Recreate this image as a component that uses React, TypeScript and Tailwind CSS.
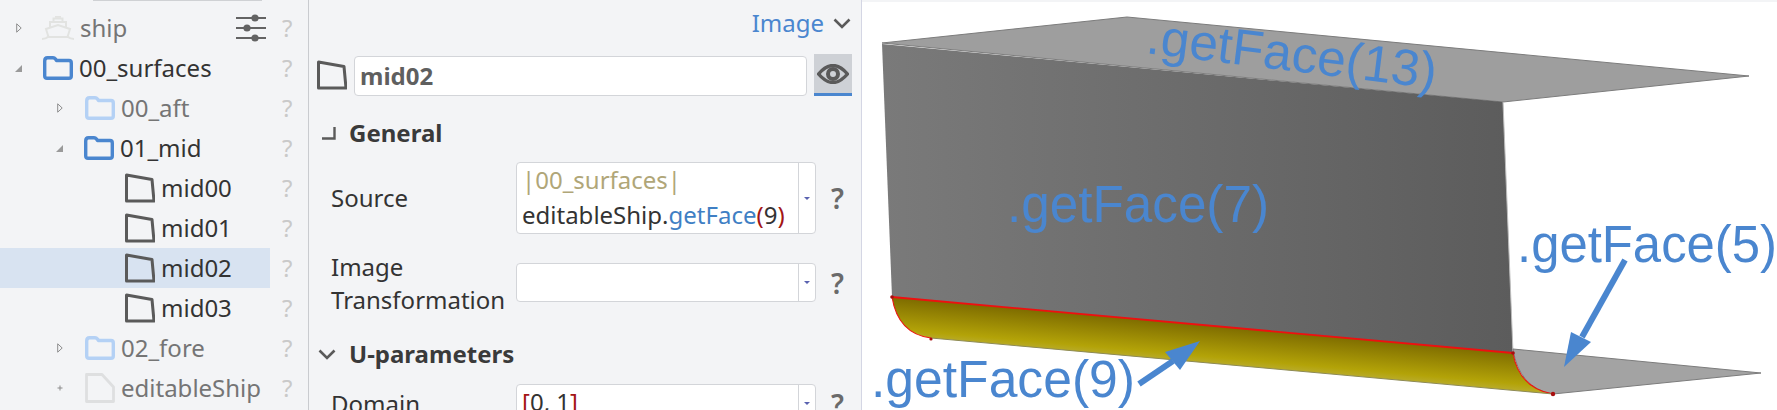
import React from "react";

const BLUE = "#4a86cf";

function Quad({ className = "" }: { className?: string }) {
  return (
    <svg width="30" height="30" viewBox="0 0 30 30" className={className} fill="none">
      <path d="M1.5 2 L27 6.5 L29 28 L1.5 28 Z" stroke="#5a5a5a" strokeWidth="3" strokeLinejoin="round" />
    </svg>
  );
}

function Folder({ light }: { light?: boolean }) {
  return (
    <svg width="30" height="24" viewBox="0 0 30 24" fill="none" className="shrink-0">
      <path
        d="M1.7 5 Q1.7 1.7 4.5 1.7 H10 Q11.5 1.7 12.5 3 L13.5 4.5 H26 Q28.3 4.5 28.3 7 V20 Q28.3 22.3 26 22.3 H4 Q1.7 22.3 1.7 20 Z"
        stroke={light ? "#b4d1f5" : BLUE}
        strokeWidth="3.4"
        strokeLinejoin="round"
      />
    </svg>
  );
}

function FileIcon() {
  return (
    <svg width="30" height="30" viewBox="0 0 30 30" fill="none" className="shrink-0">
      <path d="M1.5 1.5 H17 L28.5 14 V28.5 H1.5 Z" stroke="#dedfe0" strokeWidth="2.8" strokeLinejoin="round" />
    </svg>
  );
}

function ShipIcon() {
  return (
    <svg width="32" height="24" viewBox="0 0 32 24" fill="none" className="shrink-0" stroke="#e2e3e1" strokeWidth="2">
      <path d="M0 23 Q4 23 6.5 20.5 M32 23 Q28 23 25.5 20.5 M6 21 H26" />
      <path d="M6.5 21 L4 13 L16 9 L28 13 L25.5 21" />
      <path d="M8 11.5 V6 H24 V11.5" />
      <path d="M11.5 6 V2.5 H20.5 V6" />
      <path d="M13 0.8 H19" />
    </svg>
  );
}

function Caret({ open, plus }: { open?: boolean; plus?: boolean }) {
  if (plus)
    return (
      <svg width="6" height="6" viewBox="0 0 6 6" className="shrink-0">
        <path d="M3 0.5 V5.5 M0.5 3 H5.5" stroke="#8b8b8b" strokeWidth="1" />
      </svg>
    );
  return open ? (
    <svg width="7" height="7" viewBox="0 0 7 7" className="shrink-0">
      <path d="M7 0 V7 H0 Z" fill="#9a9a9a" />
    </svg>
  ) : (
    <svg width="6" height="10" viewBox="0 0 6 10" className="shrink-0" fill="none">
      <path d="M0.7 0.8 L5.2 5 L0.7 9.2 Z" stroke="#8d8d8d" strokeWidth="1" />
    </svg>
  );
}

function Sliders() {
  return (
    <svg width="30" height="28" viewBox="0 0 30 28" className="shrink-0">
      <g stroke="#636363" strokeWidth="2">
        <path d="M0 4 H30 M0 14 H30 M0 24 H30" />
      </g>
      <g fill="#636363">
        <circle cx="19" cy="4" r="3.6" />
        <circle cx="11" cy="14" r="3.6" />
        <circle cx="19" cy="24" r="3.6" />
      </g>
    </svg>
  );
}

type Row = {
  label: string;
  indent: string;
  icon: React.ReactNode;
  caret?: React.ReactNode;
  dim?: boolean;
  selected?: boolean;
  extra?: React.ReactNode;
  gap: string;
};

const rows: Row[] = [
  { label: "ship", indent: "pl-[16px]", caret: <Caret />, icon: <ShipIcon />, dim: true, extra: <Sliders />, gap: "gap-[20px]" },
  { label: "00_surfaces", indent: "pl-[15px]", caret: <Caret open />, icon: <Folder />, gap: "gap-[21px]" },
  { label: "00_aft", indent: "pl-[57px]", caret: <Caret />, icon: <Folder light />, dim: true, gap: "gap-[22px]" },
  { label: "01_mid", indent: "pl-[56px]", caret: <Caret open />, icon: <Folder />, gap: "gap-[21px]" },
  { label: "mid00", indent: "pl-[125px]", icon: <Quad />, gap: "" },
  { label: "mid01", indent: "pl-[125px]", icon: <Quad />, gap: "" },
  { label: "mid02", indent: "pl-[125px]", icon: <Quad />, selected: true, gap: "" },
  { label: "mid03", indent: "pl-[125px]", icon: <Quad />, gap: "" },
  { label: "02_fore", indent: "pl-[57px]", caret: <Caret />, icon: <Folder light />, dim: true, gap: "gap-[22px]" },
  { label: "editableShip", indent: "pl-[57px]", caret: <Caret plus />, icon: <FileIcon />, dim: true, gap: "gap-[22px]" },
];

function TreeRow({ r }: { r: Row }) {
  return (
    <div className="flex h-10 shrink-0 items-center">
      <div className={`flex h-10 w-[270px] items-center ${r.indent} ${r.selected ? "bg-[#d8e3f1]" : ""}`}>
        <div className={`flex items-center ${r.gap}`}>
          {r.caret}
          {r.icon}
        </div>
        <span className={`ml-[6px] whitespace-nowrap text-[24px] leading-10 ${r.dim ? "text-[#757575]" : "text-[#333333]"}`}>{r.label}</span>
        {r.extra && <span className="ml-auto mr-[4px] flex">{r.extra}</span>}
      </div>
      <span className="ml-[12px] text-[24px] leading-10 text-[#c9c9c9]">?</span>
    </div>
  );
}

function DropBox({ h, leading, children }: { h: string; leading?: string; children?: React.ReactNode }) {
  return (
    <div className={`flex w-[300px] shrink-0 overflow-hidden rounded-[4px] border border-[#d3d5d9] bg-white ${h}`}>
      <div className={`min-w-0 flex-1 pl-[5px] text-[24px] text-[#333333] ${leading ?? "leading-[33px]"}`}>{children}</div>
      <div className="flex w-[17px] items-center justify-center border-l border-[#d3d5d9]">
        <span className="h-0 w-0 border-x-[3px] border-t-[3px] border-x-transparent border-t-[#5a62b0]" />
      </div>
    </div>
  );
}

function Help() {
  return <span className="ml-[15px] text-[28px] font-semibold leading-none text-[#6a6a6a]">?</span>;
}

function Viewer() {
  const text = { fontFamily: '"Liberation Sans", Arial, sans-serif', fill: BLUE, fontSize: 51 };
  return (
    <svg width="916" height="408" viewBox="861 2 916 408" className="block">
      <defs>
        <linearGradient id="wall" x1="0" y1="0" x2="1" y2="0">
          <stop offset="0" stopColor="#7a7a7a" />
          <stop offset="1" stopColor="#5c5c5c" />
        </linearGradient>
        <linearGradient id="yellow" gradientUnits="userSpaceOnUse" x1="1200" y1="325" x2="1196.4" y2="366">
          <stop offset="0" stopColor="#7f6d00" />
          <stop offset="0.75" stopColor="#b3a308" />
          <stop offset="1" stopColor="#bcb03a" />
        </linearGradient>
      </defs>
      <path d="M881 43 L1126 17 L1748 76 L1502 102 Z" fill="#9e9e9e" stroke="#7c7c7c" strokeWidth="1" />
      <path d="M881 44 L1502 102 L1512 353 L891 297 Z" fill="url(#wall)" />
      <path d="M1502 102 L1512 353" stroke="#bdbdbd" strokeWidth="1" />
      <path d="M1512 349 L1760 373 L1552 394 Q1518 388 1512 349 Z" fill="#a3a3a3" stroke="#7c7c7c" strokeWidth="1" />
      <path d="M891 297 L1512 353 Q1518 388 1552 394 L930 338 Q897 334 891 297 Z" fill="url(#yellow)" />
      <path d="M891 297 L1512 353" stroke="#ee1010" strokeWidth="1.8" fill="none" />
      <path d="M891 297 Q897 334 930 338 M1512 353 Q1518 388 1552 394" stroke="#ee1010" strokeWidth="1.1" fill="none" />
      <path d="M930 338 L1552 394" stroke="#8d8a55" strokeWidth="1" fill="none" />
      <g fill="#a80e0e">
        <circle cx="891" cy="297" r="1.8" />
        <circle cx="930" cy="339" r="1.6" />
        <circle cx="1512" cy="353" r="1.8" />
        <circle cx="1552" cy="394" r="2.2" />
      </g>
      <text x="1006" y="222" textLength="262" lengthAdjust="spacingAndGlyphs" style={text}>.getFace(7)</text>
      <text x="870" y="397" textLength="264" lengthAdjust="spacingAndGlyphs" style={text}>.getFace(9)</text>
      <text x="1516" y="262" textLength="260" lengthAdjust="spacingAndGlyphs" style={text}>.getFace(5)</text>
      <text x="1144" y="53" textLength="292" lengthAdjust="spacingAndGlyphs" transform="rotate(7 1144 53)" style={text}>.getFace(13)</text>
      <path d="M1138 384 L1172 361" stroke={BLUE} strokeWidth="6" />
      <path d="M1199 341 L1164 352 L1179 370 Z" fill={BLUE} />
      <path d="M1624 260 L1581 337" stroke={BLUE} strokeWidth="6" />
      <path d="M1563 367 L1570 332 L1590 342 Z" fill={BLUE} />
    </svg>
  );
}

export default function App() {
  return (
    <div className="flex h-[410px] w-[1777px] overflow-hidden bg-[#f3f4f6] font-['Noto_Sans','Open_Sans',sans-serif]">
      <aside className="relative flex w-[308px] shrink-0 flex-col pt-[8px]">
        <div className="absolute left-[93px] top-0 h-[1px] w-[169px] bg-[#cfd1d4]" />
        {rows.map((r) => (
          <TreeRow key={r.label} r={r} />
        ))}
      </aside>
      <main className="flex w-[553px] shrink-0 flex-col border-l border-[#c9cbcf] pl-[8px] pr-[8px]">
        <div className="flex h-[54px] shrink-0 items-center justify-end pb-[8px] pr-[2px] text-[24px] text-[#4a86cf]">
          <span>Image</span>
          <svg width="18" height="11" viewBox="0 0 18 11" fill="none" className="ml-[9px]">
            <path d="M1.5 1.5 L9 9 L16.5 1.5" stroke="#5a5a5a" strokeWidth="2.6" />
          </svg>
        </div>
        <div className="flex h-[42px] shrink-0 items-end">
          <Quad className="mb-[6px] shrink-0" />
          <div className="ml-[7px] flex h-10 w-[453px] items-center rounded-[4px] border border-[#d3d5d9] bg-white pl-[5px] text-[24px] font-bold text-[#5f5f5f]">
            mid02
          </div>
          <div className="ml-[7px] flex h-[42px] w-[38px] items-center justify-center border-b-[3px] border-[#4a86cf] bg-[#ced1d6]">
            <svg width="32" height="20" viewBox="0 0 32 20" fill="none">
              <path d="M1.5 10 Q16 -7 30.5 10 Q16 27 1.5 10 Z" stroke="#5a5a5a" strokeWidth="3.4" strokeLinejoin="round" />
              <circle cx="16" cy="10" r="5" stroke="#5a5a5a" strokeWidth="4" />
            </svg>
          </div>
        </div>
        <div className="mt-[18px] flex h-[38px] shrink-0 items-center text-[24px] font-bold text-[#3a3a3a]">
          <svg width="14" height="13" viewBox="0 0 14 13" fill="none" className="ml-[5px]">
            <path d="M12.5 0 V11.5 H0" stroke="#5a5a5a" strokeWidth="2.4" />
          </svg>
          <span className="ml-[13px]">General</span>
        </div>
        <div className="mt-[10px] flex h-[72px] shrink-0 items-center">
          <span className="w-[199px] pl-[14px] text-[24px] text-[#333333]">Source</span>
          <DropBox h="h-[72px]" leading="leading-[35px] -mt-[1px]">
            <div className="text-[#b0a678]">|00_surfaces|</div>
            <div className="whitespace-nowrap">
              editableShip.<span className="text-[#3f7fc4]">getFace</span>
              <span className="text-[#a31515]">(</span>9<span className="text-[#a31515]">)</span>
            </div>
          </DropBox>
          <Help />
        </div>
        <div className="mt-[29px] flex h-[39px] shrink-0 items-center">
          <span className="w-[199px] pl-[14px] text-[24px] leading-[33px] text-[#333333]">
            Image
            <br />
            Transformation
          </span>
          <DropBox h="h-[39px]" />
          <Help />
        </div>
        <div className="mt-[33px] flex h-[38px] shrink-0 items-center text-[24px] font-bold text-[#3a3a3a]">
          <svg width="18" height="11" viewBox="0 0 18 11" fill="none" className="ml-[1px]">
            <path d="M1.5 1.5 L9 9 L16.5 1.5" stroke="#5a5a5a" strokeWidth="2.6" />
          </svg>
          <span className="ml-[13px]">U-parameters</span>
        </div>
        <div className="mt-[11px] flex h-[39px] shrink-0 items-center">
          <span className="w-[199px] pl-[14px] text-[24px] text-[#333333]">Domain</span>
          <DropBox h="h-[39px]">
            <span className="text-[#a31515]">[</span>0, 1<span className="text-[#a31515]">]</span>
          </DropBox>
          <Help />
        </div>
      </main>
      <section className="min-w-0 flex-1 border-l border-[#d4d6e4] pt-[2px]">
        <div className="h-full bg-white">
          <Viewer />
        </div>
      </section>
    </div>
  );
}
